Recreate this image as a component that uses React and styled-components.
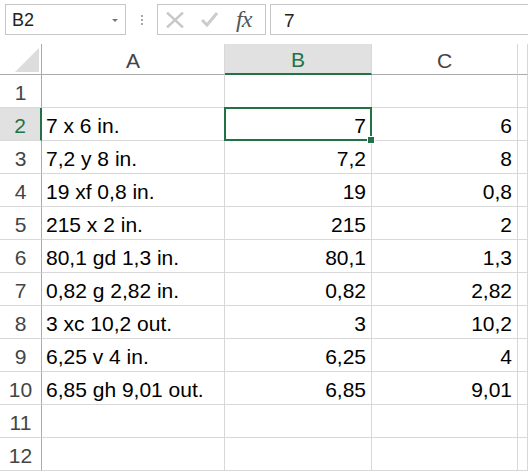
import styled, { createGlobalStyle } from "styled-components";

const GlobalStyle = createGlobalStyle`
  body {
    margin: 0;
    background: #ffffff;
    font-family: "Liberation Sans", Arial, sans-serif;
  }
`;

const green = "#217346";

const Page = styled.div`
  width: 528px;
  height: 473px;
  overflow: hidden;
  background: #fff;
`;

const FormulaBar = styled.div`
  display: flex;
  align-items: flex-start;
  height: 44px;
  padding-top: 4px;
  box-sizing: border-box;
`;

const NameBox = styled.div`
  position: relative;
  margin-left: 5px;
  width: 121px;
  height: 31px;
  box-sizing: border-box;
  border: 1px solid #c6c6c6;
  display: flex;
  align-items: center;
  padding: 2px 0 0 6px;
  font-size: 18px;
  color: #222;
`;

const DropArrow = styled.span`
  position: absolute;
  right: 7px;
  top: 14px;
  width: 0;
  height: 0;
  border-left: 3px solid transparent;
  border-right: 3px solid transparent;
  border-top: 3px solid #777;
`;

const Grip = styled.div`
  width: 31px;
  height: 31px;
  display: flex;
  flex-direction: column;
  align-items: center;
  justify-content: center;
  gap: 2px;
  span {
    width: 2px;
    height: 2px;
    background: #a6a6a6;
  }
`;

const FuncBox = styled.div`
  width: 109px;
  height: 31px;
  box-sizing: border-box;
  border: 1px solid #c6c6c6;
  display: flex;
  align-items: center;
  padding-left: 8px;
  gap: 17px;
`;

const Fx = styled.span`
  font-family: "Liberation Serif", "Times New Roman", serif;
  font-style: italic;
  font-size: 24px;
  color: #555;
  margin-left: 1px;
  letter-spacing: -1px;
`;

const FormulaInput = styled.div`
  margin-left: 4px;
  flex: 1;
  height: 31px;
  box-sizing: border-box;
  border: 1px solid #c6c6c6;
  border-right: none;
  display: flex;
  align-items: center;
  padding: 2px 0 0 13px;
  font-size: 19px;
  color: #222;
`;

const Sheet = styled.div`
  display: grid;
  grid-template-columns: 42px 183px 147px 146px 10px;
  grid-template-rows: 31px repeat(12, 33px);
`;

const Cell = styled.div`
  position: relative;
  box-sizing: border-box;
  border-right: 1px solid #d8d8d8;
  border-bottom: 1px solid #d8d8d8;
  display: flex;
  align-items: center;
  justify-content: ${(p) => (p.$align === "right" ? "flex-end" : "flex-start")};
  padding: 3px 5px 0 4px;
  font-size: 21px;
  color: #000;
  white-space: nowrap;
`;

const Corner = styled.div`
  position: relative;
  box-sizing: border-box;
  border-right: 1px solid #ababab;
  border-bottom: 1px solid #ababab;
  svg {
    position: absolute;
    right: 2px;
    bottom: 2px;
  }
`;

const ColHead = styled.div`
  box-sizing: border-box;
  display: flex;
  align-items: center;
  justify-content: center;
  font-size: 21px;
  padding-top: 3px;
  background: ${(p) => (p.$active ? "#e1e1e1" : "#fff")};
  color: ${(p) => (p.$active ? green : "#444")};
  border-right: 1px solid #d8d8d8;
  border-bottom: ${(p) => (p.$active ? `2px solid ${green}` : "1px solid #ababab")};
`;

const RowHead = styled.div`
  box-sizing: border-box;
  display: flex;
  align-items: center;
  justify-content: center;
  font-size: 21px;
  padding-top: 3px;
  background: ${(p) => (p.$active ? "#e1e1e1" : "#fff")};
  color: ${(p) => (p.$active ? green : "#444")};
  border-bottom: 1px solid #d8d8d8;
  border-right: ${(p) => (p.$active ? `2px solid ${green}` : "1px solid #ababab")};
`;

const Selected = styled(Cell)`
  &::after {
    content: "";
    position: absolute;
    left: -1px;
    top: -1px;
    right: -1px;
    bottom: -1px;
    border: 2px solid ${green};
    pointer-events: none;
  }
  &::before {
    content: "";
    position: absolute;
    right: -4px;
    bottom: -4px;
    width: 6px;
    height: 6px;
    background: ${green};
    border: 1px solid #fff;
    z-index: 2;
  }
`;

const rows = [
  ["", "", ""],
  ["7 x 6 in.", "7", "6"],
  ["7,2 y 8 in.", "7,2", "8"],
  ["19 xf 0,8 in.", "19", "0,8"],
  ["215 x 2 in.", "215", "2"],
  ["80,1 gd 1,3 in.", "80,1", "1,3"],
  ["0,82 g 2,82 in.", "0,82", "2,82"],
  ["3 xc 10,2 out.", "3", "10,2"],
  ["6,25 v 4 in.", "6,25", "4"],
  ["6,85 gh 9,01 out.", "6,85", "9,01"],
  ["", "", ""],
  ["", "", ""],
];

function App() {
  return (
    <Page>
      <GlobalStyle />
      <FormulaBar>
        <NameBox>
          B2
          <DropArrow />
        </NameBox>
        <Grip>
          <span />
          <span />
          <span />
        </Grip>
        <FuncBox>
          <svg width="18" height="16" viewBox="0 0 18 16">
            <path d="M1 0.5 L17 15.5 M17 0.5 L1 15.5" stroke="#c8c8c8" strokeWidth="2.4" fill="none" />
          </svg>
          <svg width="17" height="15" viewBox="0 0 17 15">
            <path d="M1 8 L6 13 L16 1" stroke="#cccccc" strokeWidth="3" fill="none" />
          </svg>
          <Fx>fx</Fx>
        </FuncBox>
        <FormulaInput>7</FormulaInput>
      </FormulaBar>
      <Sheet>
        <Corner>
          <svg width="24" height="24" viewBox="0 0 24 24">
            <polygon points="24,0 24,24 0,24" fill="#dcdcdc" />
          </svg>
        </Corner>
        <ColHead>A</ColHead>
        <ColHead $active>B</ColHead>
        <ColHead>C</ColHead>
        <ColHead />
        {rows.map((r, i) => {
          const n = i + 1;
          const B = n === 2 ? Selected : Cell;
          return [
            <RowHead key={`h${n}`} $active={n === 2}>
              {n}
            </RowHead>,
            <Cell key={`a${n}`}>{r[0]}</Cell>,
            <B key={`b${n}`} $align="right">
              {r[1]}
            </B>,
            <Cell key={`c${n}`} $align="right">
              {r[2]}
            </Cell>,
            <Cell key={`d${n}`} />,
          ];
        })}
      </Sheet>
    </Page>
  );
}

export default App;
